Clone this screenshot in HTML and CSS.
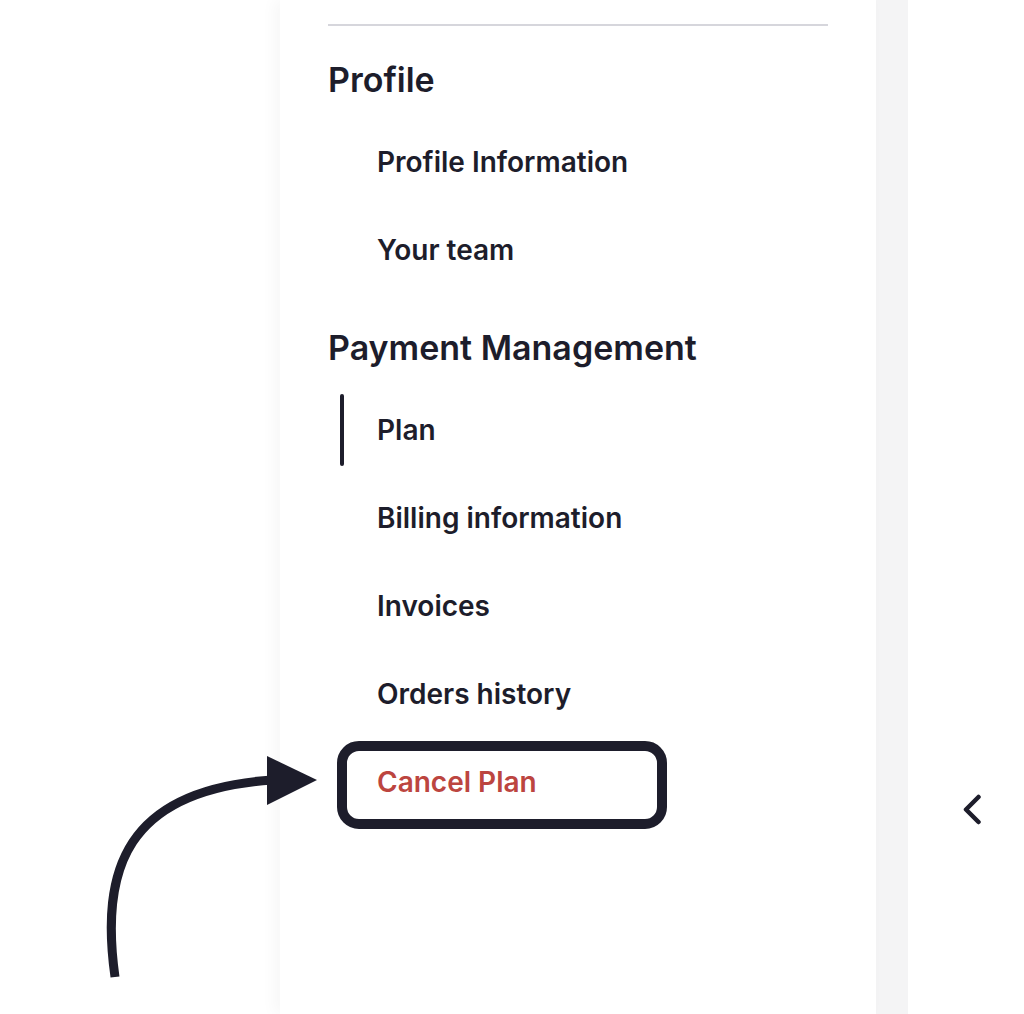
FILE: index.html
```html
<!DOCTYPE html>
<html lang="en">
<head>
<meta charset="utf-8">
<title>Settings</title>
<link rel="stylesheet" href="styles.css">
</head>
<body>
<div class="page">
  <div class="gutter"></div>
  <aside class="panel">
    <hr class="divider">
    <section class="group">
      <h2 class="group-title">Profile</h2>
      <ul class="items">
        <li class="item">Profile Information</li>
        <li class="item">Your team</li>
      </ul>
    </section>
    <section class="group">
      <h2 class="group-title">Payment Management</h2>
      <ul class="items">
        <li class="item active">Plan</li>
        <li class="item">Billing information</li>
        <li class="item">Invoices</li>
        <li class="item">Orders history</li>
        <li class="item danger">Cancel Plan<span class="highlight"></span></li>
      </ul>
    </section>
  </aside>
  <div class="strip"></div>
  <div class="side">
    <svg class="chevron" width="24" height="32" viewBox="0 0 24 32">
      <polyline points="19.5,3 7,15.5 19.5,28" fill="none" stroke="#1d1d2b" stroke-width="4.5" stroke-linecap="round" stroke-linejoin="round"/>
    </svg>
  </div>
  <svg class="arrow" width="1024" height="1014" viewBox="0 0 1024 1014">
    <path d="M115,977 C100,870 125,790 272,780" fill="none" stroke="#1d1d2b" stroke-width="9"/>
    <polygon points="267,756 317,780 267,805" fill="#1d1d2b"/>
  </svg>
</div>
</body>
</html>
```
FILE: styles.css
```css
* { box-sizing: border-box; }
html, body { margin: 0; padding: 0; background: #ffffff; }
body {
  font-family: Inter, "Noto Sans", sans-serif;
  color: #1d1d2b;
}
.page {
  position: relative;
  display: flex;
  width: 1024px;
  height: 1014px;
  overflow: hidden;
}
.gutter { width: 280px; flex: none; }
.panel {
  width: 596px;
  flex: none;
  background: #fff;
  padding: 0 48px;
  box-shadow: -6px 0 14px rgba(0, 0, 0, 0.035);
  position: relative;
  z-index: 1;
}
.divider {
  margin: 24px 0 0;
  border: none;
  height: 2px;
  background: #d6d6dc;
}
.group { margin-top: 34px; }
.group + .group { margin-top: 42px; }
.group-title {
  margin: 0 0 26px;
  font-size: 34px;
  line-height: 40px;
  font-weight: 600;
}
.items {
  list-style: none;
  margin: 0;
  padding: 0;
  display: flex;
  flex-direction: column;
  gap: 16px;
}
.item {
  position: relative;
  height: 72px;
  line-height: 72px;
  padding-left: 49px;
  font-size: 28px;
  font-weight: 600;
}
.item.active::before {
  content: "";
  position: absolute;
  left: 12px;
  top: 0;
  width: 4px;
  height: 72px;
  border-radius: 2px;
  background: #1d1d2b;
}
.item.danger { color: #bc4540; }
.highlight {
  position: absolute;
  left: 9px;
  top: -5px;
  width: 330px;
  height: 88px;
  border: 10px solid #1d1d2b;
  border-radius: 22px;
}
.strip {
  width: 32px;
  flex: none;
  background: #f4f4f5;
}
.side {
  flex: 1;
  display: flex;
  flex-direction: column;
  align-items: center;
  padding-top: 794px;
  padding-left: 10px;
}
.chevron { display: block; }
.arrow {
  position: absolute;
  left: 0;
  top: 0;
  pointer-events: none;
  z-index: 2;
}
```
